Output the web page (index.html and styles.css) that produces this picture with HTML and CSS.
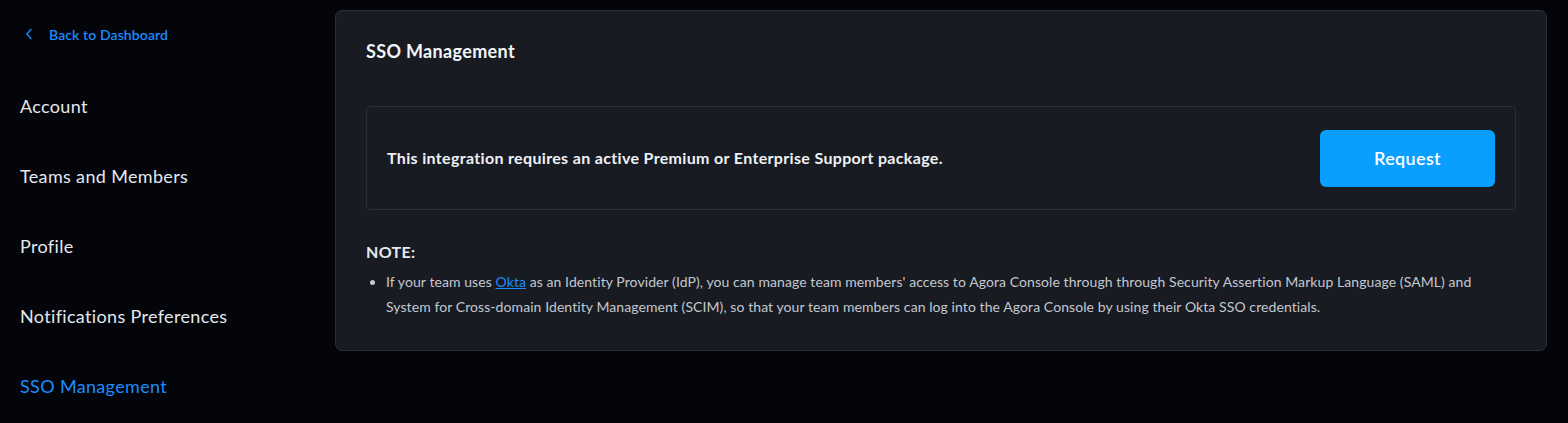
FILE: index.html
```html
<!DOCTYPE html>
<html>
<head>
<meta charset="utf-8">
<link rel="stylesheet" href="styles.css">
</head>
<body>
<div class="page">
  <aside class="sidebar">
    <a class="back" href="#">
      <svg class="chev" width="8" height="12" viewBox="0 0 8 12"><path d="M6 1.5 L1.8 6 L6 10.5" fill="none" stroke="#1a8cff" stroke-width="1.4" stroke-linecap="round" stroke-linejoin="round"/></svg>
      <span>Back to Dashboard</span>
    </a>
    <nav class="nav">
      <a class="nav-item" href="#">Account</a>
      <a class="nav-item" href="#">Teams and Members</a>
      <a class="nav-item" href="#">Profile</a>
      <a class="nav-item" href="#">Notifications Preferences</a>
      <a class="nav-item active" href="#">SSO Management</a>
    </nav>
  </aside>
  <main class="card">
    <h1 class="title">SSO Management</h1>
    <div class="notice">
      <p class="notice-text">This integration requires an active Premium or Enterprise Support package.</p>
      <button class="btn">Request</button>
    </div>
    <h2 class="note-title">NOTE:</h2>
    <ul class="note-list">
      <li>If your team uses <a href="#" class="link">Okta</a> as an Identity Provider (IdP), you can manage team members' access to Agora Console through through Security Assertion Markup Language (SAML) and System for Cross-domain Identity Management (SCIM), so that your team members can log into the Agora Console by using their Okta SSO credentials.</li>
    </ul>
  </main>
</div>
</body>
</html>
```
FILE: styles.css
```css
* { box-sizing: border-box; }
html, body {
  margin: 0;
  padding: 0;
  background: #03050a;
  font-family: Lato, "Noto Sans", sans-serif;
  letter-spacing: 0.021em;
  color: #e3e8ef;
}
.page {
  display: flex;
  height: 423px;
  padding-top: 10px;
}
.sidebar {
  width: 335px;
  flex: none;
  padding-left: 20px;
}
.back {
  display: flex;
  align-items: center;
  gap: 16px;
  margin-top: 15px;
  padding-left: 5px;
  color: #1a8cff;
  text-decoration: none;
  font-size: 14px;
  font-weight: 600;
  letter-spacing: 0.1px;
  height: 18px;
}
.nav {
  display: flex;
  flex-direction: column;
  margin-top: 51px;
}
.nav-item {
  color: #e3e8ef;
  text-decoration: none;
  font-size: 18px;
  line-height: 24px;
  height: 70px;
}
.nav-item.active { color: #1a8cff; }
.card {
  width: 1212px;
  height: 341px;
  background: #181b22;
  border: 1px solid #2b2f37;
  border-radius: 7px;
  padding: 28px 30px 0 30px;
}
.title {
  margin: 0;
  font-size: 18px;
  font-weight: 700;
  line-height: 24px;
  color: #f2f5f9;
}
.notice {
  margin-top: 43px;
  height: 104px;
  border: 1px solid #2a2e36;
  border-radius: 4px;
  display: flex;
  align-items: center;
  justify-content: space-between;
  padding: 0 20px 0 20px;
}
.notice-text {
  margin: 0 0 2px 0;
  font-size: 16px;
  font-weight: 700;
  color: #eef1f5;
}
.btn {
  width: 175px;
  height: 57px;
  border: none;
  border-radius: 6px;
  background: #0a9eff;
  color: #fff;
  font-family: inherit;
  letter-spacing: inherit;
  font-size: 18px;
  font-weight: 600;
}
.note-title {
  margin: 32px 0 0 0;
  font-size: 16px;
  font-weight: 700;
  line-height: 20px;
  color: #e6e9ee;
}
.note-list {
  margin: 7px 0 0 0;
  padding-left: 20px;
  font-size: 14px;
  line-height: 25px;
  letter-spacing: 0.08px;
  color: #c3c8d0;
}
.note-list li { padding-left: 0; }
.link { color: #1a8cff; }
```
